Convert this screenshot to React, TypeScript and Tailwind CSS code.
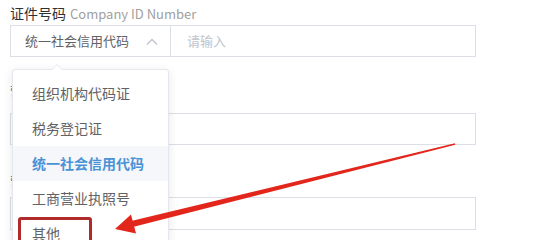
import React from "react";

const items = ["组织机构代码证", "税务登记证", "统一社会信用代码", "工商营业执照号", "其他"];

export default function App() {
  const font = { fontFamily: '"Noto Sans CJK SC", "Noto Sans", sans-serif' };
  return (
    <div className="relative w-[540px] h-[240px] overflow-hidden bg-white" style={font}>
      <div className="pl-[10px] pr-[64px] pt-[3px]">
        <div className="flex items-baseline gap-[4px] h-[20px]">
          <span className="text-[14px] text-[#303133]">证件号码</span>
          <span className="text-[13px] text-[#a0a0a0]">Company ID Number</span>
        </div>
        <div className="mt-[2px] flex h-[32px] border border-[#dcdfe6]">
          <div className="w-[160px] flex items-center justify-between pl-[14px] pr-[12px] border-r border-[#dcdfe6]">
            <span className="text-[13px] text-[#606266]">统一社会信用代码</span>
            <svg width="12" height="8" viewBox="0 0 12 8" className="mt-[1px]">
              <path d="M1 6.5 L6 1.5 L11 6.5" fill="none" stroke="#c0c4cc" strokeWidth="1.3" />
            </svg>
          </div>
          <div className="flex items-center pl-[16px] text-[13px] text-[#c0c4cc]">请输入</div>
        </div>
        <div className="mt-[24px] h-[32px] text-[13px] text-[#606266]">营业执照号</div>
        <div className="h-[32px] border border-[#dcdfe6]" />
        <div className="mt-[26px] h-[26px] text-[13px] text-[#606266]">营业期限</div>
        <div className="h-[33px] border border-[#dcdfe6]" />
      </div>

      <div className="absolute left-[12px] top-[69px] w-[157px] h-[200px] bg-white border border-[#e4e7ed] rounded-[3px] shadow-[0_2px_10px_rgba(0,0,0,0.1)] pt-[6px]">
        <div className="absolute -top-[6px] left-[38px] w-0 h-0 border-l-[6px] border-r-[6px] border-b-[6px] border-l-transparent border-r-transparent border-b-[#e4e7ed]" />
        <div className="absolute -top-[5px] left-[39px] w-0 h-0 border-l-[5px] border-r-[5px] border-b-[5px] border-l-transparent border-r-transparent border-b-white" />
        {items.map((t, i) => (
          <div
            key={t}
            className={
              i === 2
                ? "h-[35px] flex items-center pl-[19px] text-[14px] font-bold text-[#4a92d6] bg-[#f5f7fa]"
                : "h-[35px] flex items-center pl-[19px] text-[14px] text-[#606266]"
            }
          >
            {t}
          </div>
        ))}
      </div>

      <div className="absolute left-[18px] top-[217px] w-[74px] h-[30px] border-[3px] border-[#b02a2a] rounded-[3px]" />

      <svg className="absolute left-0 top-0" width="540" height="240" viewBox="0 0 540 240">
        <polygon points="455,143.3 455.3,144.8 132.8,226.9 131.2,221.1" fill="#e3261c" />
        <polygon points="115,229 131,214.5 136,233.5" fill="#e3261c" />
      </svg>
    </div>
  );
}
